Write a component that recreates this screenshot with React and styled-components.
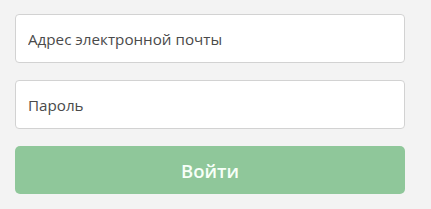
import React from "react";
import styled, { createGlobalStyle } from "styled-components";

const GlobalStyle = createGlobalStyle`
    * {
        box-sizing: border-box;
    }
    body {
        margin: 0;
        background: #f3f3f3;
        font-family: "Open Sans", "Noto Sans", sans-serif;
    }
`;

function App() {
    return (
        <>
            <GlobalStyle />
            <LoginForm onSubmit={(e) => e.preventDefault()}>
                <Field type="email" placeholder="Адрес электронной почты" />
                <Field type="password" placeholder="Пароль" />
                <SubmitBtn type="submit">Войти</SubmitBtn>
            </LoginForm>
        </>
    );
}

export default App;

const LoginForm = styled.form`
    width: 431px;
    padding: 14px 26px 0 15px;
    display: flex;
    flex-direction: column;
    gap: 17px;
`;

const Field = styled.input`
    width: 100%;
    height: 49px;
    padding: 0 12px;
    border: 1px solid #d2d2d2;
    border-radius: 4px;
    background: #fff;
    font-family: inherit;
    font-size: 15.2px;
    color: #4a4a4a;
    outline: none;
    &::placeholder {
        color: #4a4a4a;
    }
`;

const SubmitBtn = styled.button`
    width: 100%;
    height: 48px;
    border: none;
    border-radius: 5px;
    background: #8fc79a;
    color: #f7fff8;
    font-family: inherit;
    font-size: 18.5px;
    font-weight: 600;
    cursor: pointer;
`;
